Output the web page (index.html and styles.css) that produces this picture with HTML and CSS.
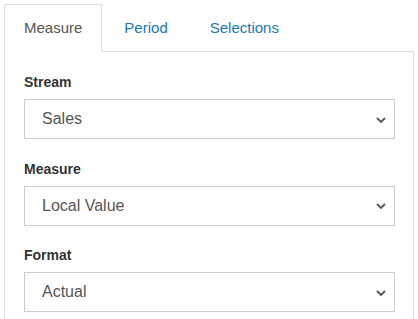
FILE: index.html
```html
<!DOCTYPE html>
<html>
<head>
<meta charset="utf-8">
<link rel="stylesheet" href="styles.css">
</head>
<body>
<div class="wrap">
  <ul class="tabs">
    <li class="tab active">Measure</li>
    <li class="tab">Period</li>
    <li class="tab">Selections</li>
  </ul>
  <div class="panel">
    <div class="group">
      <div class="label">Stream</div>
      <div class="select"><span class="value">Sales</span><svg class="chev" width="10" height="6" viewBox="0 0 10 6"><path d="M1 1 L5 5 L9 1" fill="none" stroke="#555" stroke-width="1.8"/></svg></div>
    </div>
    <div class="group">
      <div class="label">Measure</div>
      <div class="select"><span class="value">Local Value</span><svg class="chev" width="10" height="6" viewBox="0 0 10 6"><path d="M1 1 L5 5 L9 1" fill="none" stroke="#555" stroke-width="1.8"/></svg></div>
    </div>
    <div class="group">
      <div class="label">Format</div>
      <div class="select"><span class="value">Actual</span><svg class="chev" width="10" height="6" viewBox="0 0 10 6"><path d="M1 1 L5 5 L9 1" fill="none" stroke="#555" stroke-width="1.8"/></svg></div>
    </div>
  </div>
</div>
</body>
</html>
```
FILE: styles.css
```css
* { box-sizing: border-box; }
body {
  margin: 0;
  background: #fff;
  font-family: "Liberation Sans", Arial, sans-serif;
}
.wrap {
  padding: 4px 4px 0 4px;
  width: 418px;
}
.tabs {
  list-style: none;
  margin: 0;
  padding: 0;
  display: flex;
  border-bottom: 1px solid #ddd;
  width: 410px;
}
.tab {
  padding: 0 19px;
  line-height: 46px;
  border: 1px solid transparent;
  margin-right: 2px;
  margin-bottom: -1px;
  font-size: 15px;
  color: #1a78b6;
}
.tab.active {
  color: #555;
  border-color: #ddd;
  border-bottom-color: #fff;
  background: #fff;
}
.panel {
  width: 410px;
  border: 1px solid #ddd;
  border-top: none;
  padding: 20px 18px 20px 19px;
  height: 280px;
}
.group {
  margin-bottom: 19.5px;
}
.label {
  font-size: 14px;
  font-weight: bold;
  color: #333;
  line-height: 20px;
  margin-bottom: 7px;
}
.select {
  height: 40px;
  border: 1px solid #ccc;
  display: flex;
  align-items: center;
  justify-content: space-between;
  padding: 0 8px 0 17px;
  background: #fff;
}
.value {
  font-size: 16px;
  color: #555;
}
.chev {
  display: block;
  margin-top: 1px;
}
```
